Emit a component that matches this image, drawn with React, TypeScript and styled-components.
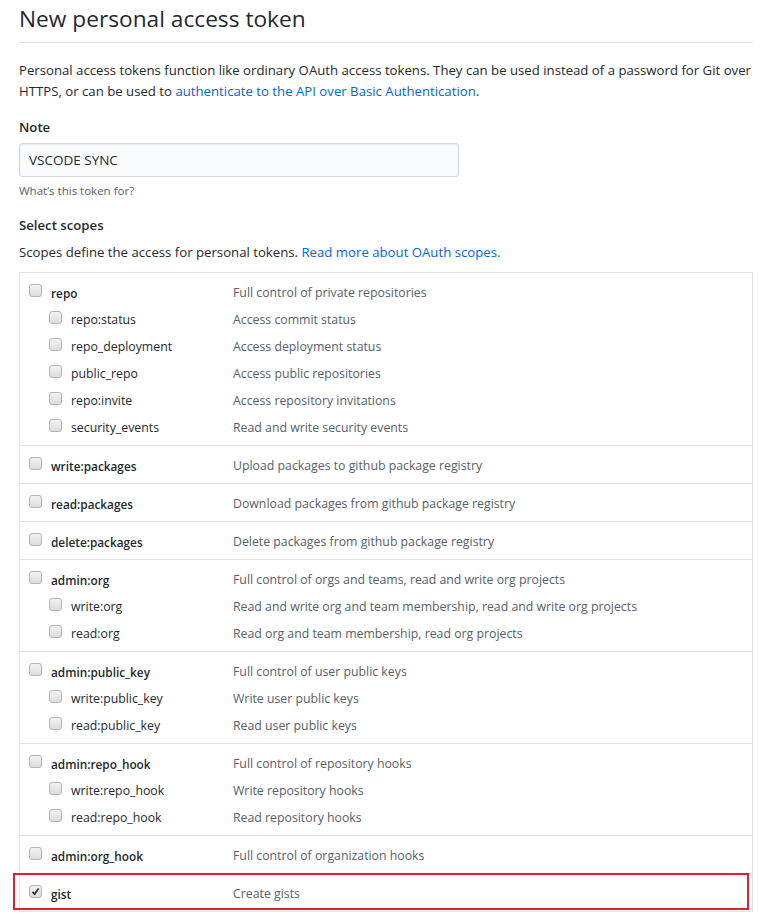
import React from 'react';
import styled, { createGlobalStyle } from 'styled-components';

const GlobalStyle = createGlobalStyle`
  body {
    margin: 0;
    background: #fff;
    color: #24292e;
    font-family: 'Open Sans', 'Segoe UI', sans-serif;
    font-size: 13.2px;
  }
`;

const Page = styled.main`
  width: 734px;
  margin-left: 19px;
`;

const Title = styled.h1`
  margin: 0;
  padding: 4px 0 9px;
  font-size: 22.7px;
  font-weight: 400;
  line-height: 29px;
  border-bottom: 1px solid #e1e4e8;
`;

const Lead = styled.p`
  margin: 17px 0 0;
  line-height: 21px;
`;

const Link = styled.a`
  color: #0366d6;
  text-decoration: none;
`;

const Label = styled.div`
  margin-top: 15px;
  font-weight: 600;
  line-height: 20px;
`;

const TextInput = styled.input`
  box-sizing: border-box;
  display: block;
  width: 440px;
  height: 34px;
  margin-top: 6px;
  padding: 6px 9px;
  font: inherit;
  font-size: 13.5px;
  color: #24292e;
  background: #fafbfc;
  border: 1px solid #d1d5da;
  border-radius: 3px;
  box-shadow: inset 0 1px 2px rgba(27, 31, 35, 0.075);
  outline: none;
`;

const Hint = styled.div`
  margin-top: 6px;
  padding-bottom: 1px;
  font-size: 11.5px;
  line-height: 16px;
  color: #586069;
`;

const Note = styled.p`
  margin: 7px 0 0;
  line-height: 21px;
`;

const ScopeBox = styled.div`
  margin-top: 9px;
  border: 1px solid #e1e4e8;
  border-bottom: none;
`;

const Group = styled.div`
  padding: 5px 0;
  border-bottom: 1px solid #e1e4e8;
`;

const Row = styled.label<{ $child?: boolean; $marked?: boolean }>`
  position: relative;
  box-sizing: border-box;
  display: grid;
  grid-template-columns: ${p => (p.$child ? '20px 22px 162px' : '0 22px 182px')} 1fr;
  align-items: center;
  height: 27px;
  padding: 2px 0 0 9px;
  font-size: 12.3px;
  ${p =>
    p.$marked &&
    `
    &::after {
      content: '';
      position: absolute;
      left: -7px;
      right: 3px;
      top: -6px;
      bottom: -4px;
      border: 2px solid #e3202a;
      pointer-events: none;
    }
  `}
`;

const Box = styled.span`
  grid-column: 2;
  box-sizing: border-box;
  width: 13px;
  height: 13px;
  margin-top: -4px;
  border: 1px solid #b4b4b4;
  border-radius: 3px;
  background: linear-gradient(#f2f2f2, #dcdcdc);
  display: flex;
  align-items: center;
  justify-content: center;
`;

const Name = styled.span<{ $child?: boolean }>`
  grid-column: 3;
  font-weight: ${p => (p.$child ? 400 : 600)};
  font-size: ${p => (p.$child ? '12.3px' : '11.8px')};
  color: #24292e;
  white-space: nowrap;
`;

const Desc = styled.span`
  grid-column: 4;
  color: #586069;
  white-space: nowrap;
`;

type Scope = { name: string; desc: string; checked?: boolean; children?: Scope[] };

const scopes: Scope[] = [
  {
    name: 'repo',
    desc: 'Full control of private repositories',
    children: [
      { name: 'repo:status', desc: 'Access commit status' },
      { name: 'repo_deployment', desc: 'Access deployment status' },
      { name: 'public_repo', desc: 'Access public repositories' },
      { name: 'repo:invite', desc: 'Access repository invitations' },
      { name: 'security_events', desc: 'Read and write security events' },
    ],
  },
  { name: 'write:packages', desc: 'Upload packages to github package registry' },
  { name: 'read:packages', desc: 'Download packages from github package registry' },
  { name: 'delete:packages', desc: 'Delete packages from github package registry' },
  {
    name: 'admin:org',
    desc: 'Full control of orgs and teams, read and write org projects',
    children: [
      { name: 'write:org', desc: 'Read and write org and team membership, read and write org projects' },
      { name: 'read:org', desc: 'Read org and team membership, read org projects' },
    ],
  },
  {
    name: 'admin:public_key',
    desc: 'Full control of user public keys',
    children: [
      { name: 'write:public_key', desc: 'Write user public keys' },
      { name: 'read:public_key', desc: 'Read user public keys' },
    ],
  },
  {
    name: 'admin:repo_hook',
    desc: 'Full control of repository hooks',
    children: [
      { name: 'write:repo_hook', desc: 'Write repository hooks' },
      { name: 'read:repo_hook', desc: 'Read repository hooks' },
    ],
  },
  { name: 'admin:org_hook', desc: 'Full control of organization hooks' },
  { name: 'gist', desc: 'Create gists', checked: true },
];

const Check = () => (
  <svg width="9" height="9" viewBox="0 0 9 9">
    <path d="M1.5 4.8 L3.6 7 L7.6 1.5" fill="none" stroke="#333" strokeWidth="1.8" />
  </svg>
);

const ScopeRow: React.FC<{ scope: Scope; child?: boolean }> = ({ scope, child }) => (
  <Row $child={child} $marked={scope.checked}>
    <Box>{scope.checked && <Check />}</Box>
    <Name $child={child}>{scope.name}</Name>
    <Desc>{scope.desc}</Desc>
  </Row>
);

export default function App() {
  return (
    <>
      <GlobalStyle />
      <Page>
        <Title>New personal access token</Title>
        <Lead>
          Personal access tokens function like ordinary OAuth access tokens. They can be used instead of a
          password for Git over HTTPS, or can be used to{' '}
          <Link href="#">authenticate to the API over Basic Authentication</Link>.
        </Lead>
        <Label>Note</Label>
        <TextInput defaultValue="VSCODE SYNC" />
        <Hint>What’s this token for?</Hint>
        <Label>Select scopes</Label>
        <Note>
          Scopes define the access for personal tokens. <Link href="#">Read more about OAuth scopes.</Link>
        </Note>
        <ScopeBox>
          {scopes.map(s => (
            <Group key={s.name}>
              <ScopeRow scope={s} />
              {s.children?.map(c => <ScopeRow key={c.name} scope={c} child />)}
            </Group>
          ))}
        </ScopeBox>
      </Page>
    </>
  );
}
